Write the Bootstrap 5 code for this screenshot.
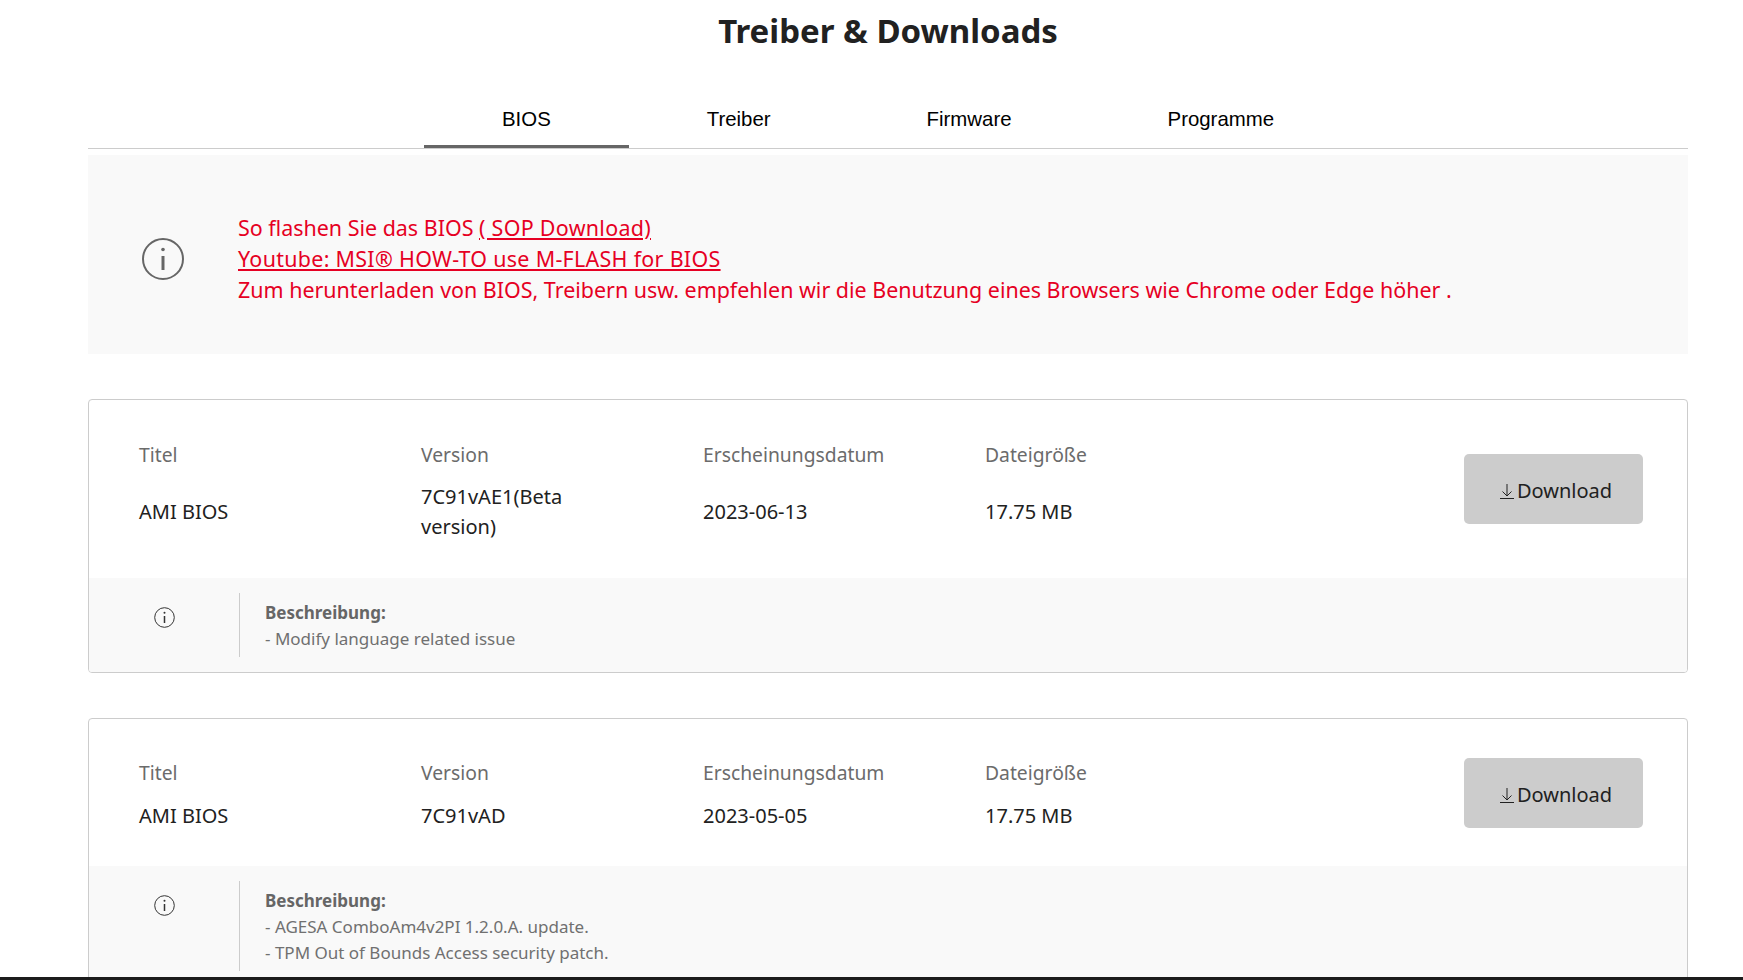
<!DOCTYPE html>
<html lang="de">
<head>
  <meta charset="UTF-8">
  <meta name="viewport" content="width=device-width, initial-scale=1.0">
  <title>Treiber &amp; Downloads</title>
  <link href="https://cdn.jsdelivr.net/npm/bootstrap@5.3.0/dist/css/bootstrap.min.css" rel="stylesheet">
  <style>
    html, body { height: 980px; overflow: hidden; }
    body { font-family: "Noto Sans", "Open Sans", sans-serif; color: #212121; background: #fff; }
    .page-wrap { width: 1600px; margin-left: 88px; }
    .page-title { font-size: 33px; font-weight: 700; line-height: 46px; padding-top: 8px; margin: 0 0 41px; text-align: center; }
    .tab-bar { border-bottom: 1px solid #ccc; height: 54px; padding-left: 336px; }
    .tab-item { font-family: "Liberation Sans", Arial, sans-serif; font-size: 20.4px; color: #000; padding: 9px 78px 0; height: 53px; text-decoration: none; }
    .tab-item.is-on { border-bottom: 3px solid #666; }
    .notice-box { background: #f9f9f9; height: 199px; margin-top: 6px; padding-top: 8px; color: #e60023; font-size: 21.45px; line-height: 31px; }
    .notice-icon { width: 150px; padding-left: 54px; }
    .notice-box a { color: #e60023; letter-spacing: .3px; }
    .dl-box { border: 1px solid #ccc; border-radius: 4px; margin-top: 45px; overflow: hidden; }
    .dl-top { padding: 0 44px 0 50px; }
    .dl-fields { padding-top: 4px; gap: 12.5px; }
    .dl-cell { width: 282px; padding-right: 80px; font-size: 20px; line-height: 30px; }
    .dl-head .dl-cell { color: #6b6b6b; font-size: 19.3px; }
    .dl-btn { width: 179px; height: 70px; padding: 4px 0 0 5px; background: #ccc; border: 0; border-radius: 5px; color: #212121; font-size: 20px; margin-left: auto; gap: 3px; }
    .dl-btn:hover { background: #ccc; color: #212121; }
    .dl-info { background: #f9f9f9; padding: 15px 0; font-size: 17px; line-height: 26px; color: #707070; }
    .dl-info-icon { width: 150px; padding: 14px 0 0 65px; }
    .dl-info-text { border-left: 1px solid #ccc; padding: 7px 0 5px 25px; flex-grow: 1; }
    .dl-info-text strong { color: #666; font-weight: 700; }
    .bottom-line { position: fixed; left: 0; right: 0; bottom: 0; height: 3px; background: #1c1c1c; }
  </style>
</head>
<body>
  <div class="page-wrap">
    <h1 class="page-title">Treiber &amp; Downloads</h1>

    <div class="tab-bar d-flex">
      <a class="tab-item is-on" href="#">BIOS</a>
      <a class="tab-item" href="#">Treiber</a>
      <a class="tab-item" href="#">Firmware</a>
      <a class="tab-item" href="#">Programme</a>
    </div>

    <div class="notice-box d-flex align-items-center">
      <div class="notice-icon">
        <svg class="d-block" width="42" height="42" viewBox="0 0 42 42" fill="none" stroke="#666" stroke-width="2"><circle cx="21" cy="21" r="20"/><path d="M21 18v14" stroke-width="3"/><circle cx="21" cy="11.5" r="1.8" fill="#666" stroke="none"/></svg>
      </div>
      <div>
        <div>So flashen Sie das BIOS <a href="#">( SOP Download)</a></div>
        <div><a href="#">Youtube: MSI® HOW-TO use M-FLASH for BIOS</a></div>
        <div>Zum herunterladen von BIOS, Treibern usw. empfehlen wir die Benutzung eines Browsers wie Chrome oder Edge höher .</div>
      </div>
    </div>

    <div class="dl-box">
      <div class="dl-top d-flex align-items-center" style="height: 178px">
        <div class="dl-fields flex-grow-1 d-flex flex-column">
          <div class="d-flex dl-head">
            <div class="dl-cell">Titel</div><div class="dl-cell">Version</div><div class="dl-cell">Erscheinungsdatum</div><div class="dl-cell">Dateigröße</div>
          </div>
          <div class="d-flex align-items-center">
            <div class="dl-cell">AMI BIOS</div><div class="dl-cell">7C91vAE1(Beta version)</div><div class="dl-cell">2023-06-13</div><div class="dl-cell">17.75 MB</div>
          </div>
        </div>
        <button class="btn dl-btn d-flex align-items-center justify-content-center" type="button">
          <svg width="14" height="16" viewBox="0 0 14 16" fill="none" stroke="#212121"><path d="M7 1v12M2.5 8.5 7 13l4.500-4.500M0 15.500h14"/></svg>Download
        </button>
      </div>
      <div class="dl-info d-flex">
        <div class="dl-info-icon">
          <svg class="d-block" width="21" height="21" viewBox="0 0 21 21" fill="none" stroke="#333"><circle cx="10.500" cy="10.500" r="9.800"/><path d="M10.500 9v7" stroke-width="1.500"/><circle cx="10.500" cy="5.800" r="1" fill="#333" stroke="none"/></svg>
        </div>
        <div class="dl-info-text">
          <div><strong>Beschreibung:</strong></div>
          <div>- Modify language related issue</div>
        </div>
      </div>
    </div>

    <div class="dl-box">
      <div class="dl-top d-flex align-items-center" style="height: 147px">
        <div class="dl-fields flex-grow-1 d-flex flex-column">
          <div class="d-flex dl-head">
            <div class="dl-cell">Titel</div><div class="dl-cell">Version</div><div class="dl-cell">Erscheinungsdatum</div><div class="dl-cell">Dateigröße</div>
          </div>
          <div class="d-flex align-items-center">
            <div class="dl-cell">AMI BIOS</div><div class="dl-cell">7C91vAD</div><div class="dl-cell">2023-05-05</div><div class="dl-cell">17.75 MB</div>
          </div>
        </div>
        <button class="btn dl-btn d-flex align-items-center justify-content-center" type="button">
          <svg width="14" height="16" viewBox="0 0 14 16" fill="none" stroke="#212121"><path d="M7 1v12M2.500 8.500 7 13l4.500-4.500M0 15.500h14"/></svg>Download
        </button>
      </div>
      <div class="dl-info d-flex">
        <div class="dl-info-icon">
          <svg class="d-block" width="21" height="21" viewBox="0 0 21 21" fill="none" stroke="#333"><circle cx="10.500" cy="10.500" r="9.800"/><path d="M10.500 9v7" stroke-width="1.500"/><circle cx="10.500" cy="5.800" r="1" fill="#333" stroke="none"/></svg>
        </div>
        <div class="dl-info-text">
          <div><strong>Beschreibung:</strong></div>
          <div>- AGESA ComboAm4v2PI 1.2.0.A. update.</div>
          <div>- TPM Out of Bounds Access security patch.</div>
        </div>
      </div>
    </div>
  </div>
  <div class="bottom-line"></div>
  <script src="https://cdn.jsdelivr.net/npm/bootstrap@5.3.0/dist/js/bootstrap.bundle.min.js"></script>
</body>
</html>
